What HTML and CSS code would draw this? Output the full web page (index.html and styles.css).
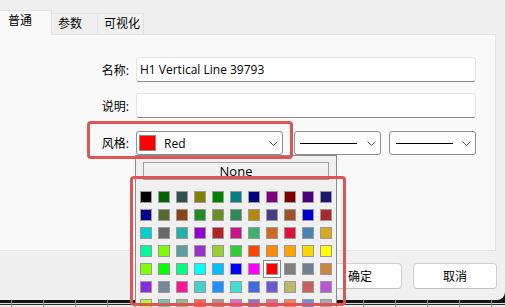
FILE: index.html
```html
<!DOCTYPE html>
<html lang="zh">
<head>
<meta charset="utf-8">
<link rel="stylesheet" href="styles.css">
</head>
<body>
<div class="window">
  <div class="tabs">
    <div class="tab active">普通</div>
    <div class="tab t2">参数</div>
    <div class="tab t3">可视化</div>
  </div>
  <div class="panel">
    <div class="row">
      <span class="lbl">名称:</span>
      <div class="textbox">H1 Vertical Line 39793</div>
    </div>
    <div class="row r2">
      <span class="lbl">说明:</span>
      <div class="textbox"></div>
    </div>
    <div class="row r3">
      <span class="lbl">风格:</span>
      <div class="combo c1">
        <span class="redswatch"></span>
        <span class="ctext">Red</span>
        <svg class="chev" width="9" height="5" viewBox="0 0 9 5"><path d="M0.5 0.5 L4.5 4.5 L8.5 0.5" stroke="#5a5a5a" stroke-width="1" fill="none"/></svg>
      </div>
      <div class="combo c2">
        <span class="line"></span>
        <svg class="chev" width="9" height="5" viewBox="0 0 9 5"><path d="M0.5 0.5 L4.5 4.5 L8.5 0.5" stroke="#5a5a5a" stroke-width="1" fill="none"/></svg>
      </div>
      <div class="combo c3">
        <span class="line"></span>
        <svg class="chev" width="9" height="5" viewBox="0 0 9 5"><path d="M0.5 0.5 L4.5 4.5 L8.5 0.5" stroke="#5a5a5a" stroke-width="1" fill="none"/></svg>
      </div>
    </div>
  </div>
  <div class="buttons">
    <button class="btn">确定</button>
    <button class="btn">取消</button>
  </div>
</div>
<div class="ruler"></div>

<div class="popup">
  <div class="none">None</div>
  <div class="grid">
    <span class="sw" style="background:#000000"></span>
    <span class="sw" style="background:#006400"></span>
    <span class="sw" style="background:#2F4F4F"></span>
    <span class="sw" style="background:#808000"></span>
    <span class="sw" style="background:#008000"></span>
    <span class="sw" style="background:#008080"></span>
    <span class="sw" style="background:#000080"></span>
    <span class="sw" style="background:#800080"></span>
    <span class="sw" style="background:#800000"></span>
    <span class="sw" style="background:#4B0082"></span>
    <span class="sw" style="background:#191970"></span>

    <span class="sw" style="background:#00008B"></span>
    <span class="sw" style="background:#556B2F"></span>
    <span class="sw" style="background:#8B4513"></span>
    <span class="sw" style="background:#228B22"></span>
    <span class="sw" style="background:#6B8E23"></span>
    <span class="sw" style="background:#2E8B57"></span>
    <span class="sw" style="background:#B8860B"></span>
    <span class="sw" style="background:#483D8B"></span>
    <span class="sw" style="background:#A0522D"></span>
    <span class="sw" style="background:#0000CD"></span>
    <span class="sw" style="background:#A52A2A"></span>

    <span class="sw" style="background:#00CED1"></span>
    <span class="sw" style="background:#696969"></span>
    <span class="sw" style="background:#20B2AA"></span>
    <span class="sw" style="background:#9400D3"></span>
    <span class="sw" style="background:#B22222"></span>
    <span class="sw" style="background:#C71585"></span>
    <span class="sw" style="background:#3CB371"></span>
    <span class="sw" style="background:#D2691E"></span>
    <span class="sw" style="background:#DC143C"></span>
    <span class="sw" style="background:#4682B4"></span>
    <span class="sw" style="background:#DAA520"></span>

    <span class="sw" style="background:#00FA9A"></span>
    <span class="sw" style="background:#7CFC00"></span>
    <span class="sw" style="background:#5F9EA0"></span>
    <span class="sw" style="background:#9932CC"></span>
    <span class="sw" style="background:#9ACD32"></span>
    <span class="sw" style="background:#32CD32"></span>
    <span class="sw" style="background:#FF4500"></span>
    <span class="sw" style="background:#FF8C00"></span>
    <span class="sw" style="background:#FFA500"></span>
    <span class="sw" style="background:#FFD700"></span>
    <span class="sw" style="background:#FFFF00"></span>

    <span class="sw" style="background:#7FFF00"></span>
    <span class="sw" style="background:#00FF00"></span>
    <span class="sw" style="background:#00FF7F"></span>
    <span class="sw" style="background:#00FFFF"></span>
    <span class="sw" style="background:#00BFFF"></span>
    <span class="sw" style="background:#0000FF"></span>
    <span class="sw" style="background:#FF00FF"></span>
    <span class="sw sel" style="background:#FF0000"></span>
    <span class="sw" style="background:#808080"></span>
    <span class="sw" style="background:#708090"></span>
    <span class="sw" style="background:#CD853F"></span>

    <span class="sw" style="background:#8A2BE2"></span>
    <span class="sw" style="background:#778899"></span>
    <span class="sw" style="background:#FF1493"></span>
    <span class="sw" style="background:#48D1CC"></span>
    <span class="sw" style="background:#1E90FF"></span>
    <span class="sw" style="background:#40E0D0"></span>
    <span class="sw" style="background:#4169E1"></span>
    <span class="sw" style="background:#6A5ACD"></span>
    <span class="sw" style="background:#BDB76B"></span>
    <span class="sw" style="background:#CD5C5C"></span>
    <span class="sw" style="background:#BA55D3"></span>

    <span class="sw" style="background:#ADFF2F"></span>
    <span class="sw" style="background:#66CDAA"></span>
    <span class="sw" style="background:#8FBC8F"></span>
    <span class="sw" style="background:#FF6347"></span>
    <span class="sw" style="background:#BC8F8F"></span>
    <span class="sw" style="background:#DA70D6"></span>
    <span class="sw" style="background:#9370DB"></span>
    <span class="sw" style="background:#DB7093"></span>
    <span class="sw" style="background:#FF7F50"></span>
    <span class="sw" style="background:#6495ED"></span>
    <span class="sw" style="background:#A9A9A9"></span>
  </div>
</div>

<div class="mark mark1"></div>
<div class="mark mark2"></div>
</body>
</html>
```

FILE: styles.css
```css
* { box-sizing: border-box; }
html, body { margin: 0; padding: 0; }
body {
  width: 505px;
  height: 307px;
  overflow: hidden;
  position: relative;
  background: #141414;
  font-family: "Open Sans", "Noto Sans CJK SC", sans-serif;
  font-size: 12px;
  color: #000;
}

.window {
  height: 300px;
  background: #f0f0f0;
  border-bottom-right-radius: 8px;
  display: flex;
  flex-direction: column;
}

/* tabs */
.tabs {
  height: 34px;
  display: flex;
  align-items: flex-end;
}
.tab {
  height: 21px;
  border-top: 1px solid #e3e3e3;
  border-right: 1px solid #e3e3e3;
  background: #f0f0f0;
  padding-left: 6px;
  line-height: 20px;
  white-space: nowrap;
}
.tab.active {
  width: 52px;
  height: 25px;
  margin-bottom: -1px;
  padding-left: 8px;
  background: #f9f9f9;
  position: relative;
  z-index: 1;
}
.tab.t2 { width: 46px; }
.tab.t3 { width: 46px; }

/* panel */
.panel {
  width: 496px;
  height: 217px;
  background: #f9f9f9;
  border: 1px solid #e3e3e3;
  border-left: 0;
  padding-top: 22px;
}
.row {
  display: flex;
  align-items: center;
}
.row.r2 { margin-top: 11px; }
.row.r3 { margin-top: 13px; }
.lbl {
  width: 129px;
  margin-right: 7px;
  text-align: right;
  white-space: nowrap;
}
.textbox {
  width: 340px;
  height: 25px;
  background: #fff;
  border: 1px solid #e5e5e5;
  border-bottom-color: #8a8a8a;
  border-radius: 3px;
  padding-left: 3px;
  line-height: 23px;
  white-space: nowrap;
}

.combo {
  height: 24px;
  background: #fff;
  border: 1px solid #8e8e8e;
  border-radius: 3px;
  display: flex;
  align-items: center;
}
.combo .chev { margin-left: auto; flex: none; }
.c1 { width: 147px; padding: 0 4px 0 2px; }
.c2 { width: 87px; margin-left: 11px; padding: 0 4px 0 5px; }
.c3 { width: 87px; margin-left: 8px; padding: 0 4px 0 6px; }
.redswatch {
  width: 17px;
  height: 16px;
  background: #ff0000;
  border: 1px solid #8a8a8a;
  flex: none;
}
.ctext { margin-left: 8px; }
.line {
  width: 57px;
  height: 1px;
  background: #000;
  flex: none;
}

/* buttons */
.buttons {
  display: flex;
  justify-content: flex-end;
  gap: 11px;
  padding: 12px 8px 0 0;
}
.btn {
  width: 84px;
  height: 26px;
  border: 1px solid #d0d0d0;
  border-bottom-color: #c2c2c2;
  border-radius: 4px;
  background: #fdfdfd;
  font: inherit;
  color: #000;
  padding: 0;
}

/* ruler strip under the window */
.ruler {
  height: 7px;
  background:
    repeating-linear-gradient(90deg, transparent 0 11px, #8a8a8a 11px 12px, transparent 12px 32px),
    linear-gradient(#141414 0 3px, #dcdcdc 3px 4px, #2a2a2a 4px 5px, #ededed 5px 7px);
}

/* dropdown popup */
.popup {
  position: absolute;
  left: 135px;
  top: 155px;
  width: 202px;
  height: 152px;
  overflow: hidden;
  background: #f0f0f0;
  border: 1px solid #8a8a8a;
  border-bottom: 0;
  padding: 6px 4px 0;
}
.none {
  margin: 0 3px;
  height: 18px;
  border: 1px solid #a0a0a0;
  background: #f0f0f0;
  text-align: center;
  line-height: 16px;
  font-size: 13px;
}
.grid {
  margin-top: 11px;
  display: grid;
  grid-template-columns: repeat(11, 12px);
  grid-auto-rows: 12px;
  gap: 6px;
}
.sw {
  border: 1px solid #9a9a9a;
}
.sw.sel {
  box-shadow: 0 0 0 2px #fff, 0 0 0 3px #8a8a8a;
}

/* red annotation frames */
.mark {
  position: absolute;
  border: 3px solid #e25353;
  border-radius: 4px;
}
.mark1 { left: 87px; top: 121px; width: 206px; height: 38px; }
.mark2 { left: 130px; top: 176px; width: 216px; height: 130px; }
```
